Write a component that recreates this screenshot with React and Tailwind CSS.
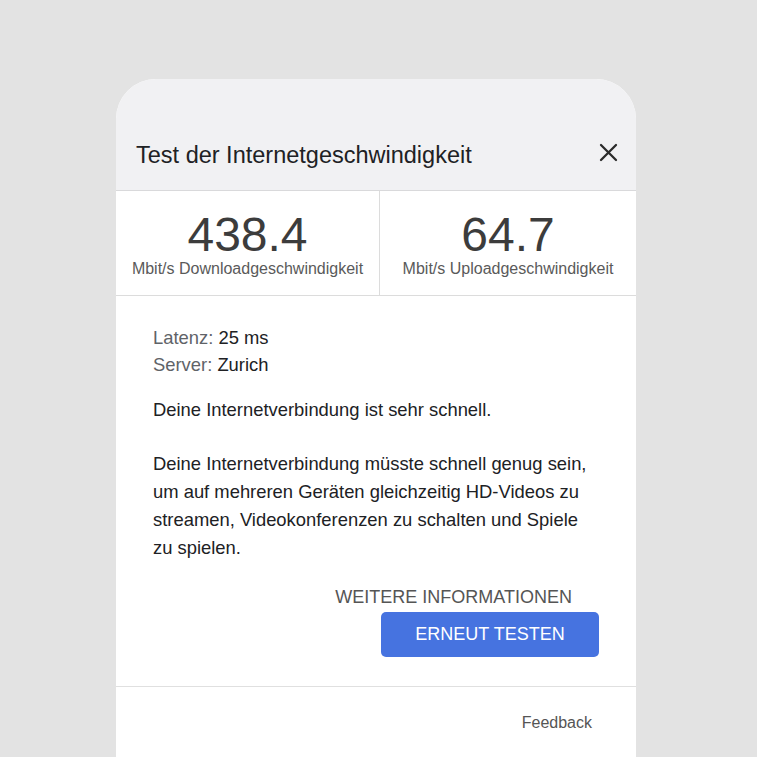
import React from "react";

const font = { fontFamily: '"Liberation Sans", Arial, sans-serif' };

function CloseIcon() {
  return (
    <svg width="19" height="19" viewBox="0 0 19 19" className="mb-[7px] shrink-0">
      <path d="M2 2 L17 17 M17 2 L2 17" stroke="#2b2b2b" strokeWidth="2.3" strokeLinecap="round" />
    </svg>
  );
}

function Stat({ value, label, divider }) {
  return (
    <div className={`flex flex-col items-center pt-[20px] ${divider ? "border-r border-[#dcdcdc]" : ""}`}>
      <div className="text-[48px] leading-[48px] text-[#3c3c3c]">{value}</div>
      <div className="text-[16px] leading-[20px] text-[#5a5a5a]">{label}</div>
    </div>
  );
}

export default function App() {
  return (
    <div
      className="h-screen w-full overflow-hidden bg-[#e3e3e3] pl-[116px] pt-[79px]"
      style={font}
    >
      <div className="w-[520px] min-h-[700px] overflow-hidden rounded-t-[40px] bg-white">
        {/* Header */}
        <div className="flex h-[112px] items-end justify-between border-b border-[#d9d9db] bg-[#f1f1f3] pb-[21px] pl-[20px] pr-[18px]">
          <h1 className="text-[23.5px] leading-[28px] text-[#202124]">
            Test der Internetgeschwindigkeit
          </h1>
          <CloseIcon />
        </div>

        {/* Results */}
        <div className="grid h-[105px] grid-cols-[264px_1fr] border-b border-[#dcdcdc]">
          <Stat value="438.4" label="Mbit/s Downloadgeschwindigkeit" divider />
          <Stat value="64.7" label="Mbit/s Uploadgeschwindigkeit" />
        </div>

        {/* Details */}
        <div className="border-b border-[#e0e0e0] px-[37px] pb-[29px] pt-[28px] text-[18.4px] text-[#202124]">
          <div className="leading-[27px]">
            <div>
              <span className="text-[#5f6368]">Latenz: </span>25 ms
            </div>
            <div>
              <span className="text-[#5f6368]">Server: </span>Zurich
            </div>
          </div>
          <p className="mt-[18px] leading-[28px]">Deine Internetverbindung ist sehr schnell.</p>
          <p className="mt-[26px] leading-[28px]">
            Deine Internetverbindung müsste schnell genug sein, um auf mehreren Geräten
            gleichzeitig HD-Videos zu streamen, Videokonferenzen zu schalten und Spiele zu
            spielen.
          </p>
          <div className="mt-[23px] flex flex-col items-end">
            <a className="mr-[27px] text-[18px] leading-[24px] text-[#555555]">WEITERE INFORMATIONEN</a>
            <button className="mt-[3px] h-[45px] w-[218px] rounded-[5px] bg-[#4673e0] text-[18px] text-white">
              ERNEUT TESTEN
            </button>
          </div>
        </div>

        {/* Footer */}
        <div className="flex justify-end pr-[44px] pt-[26px]">
          <span className="text-[16px] leading-[20px] text-[#555555]">Feedback</span>
        </div>
      </div>
    </div>
  );
}
